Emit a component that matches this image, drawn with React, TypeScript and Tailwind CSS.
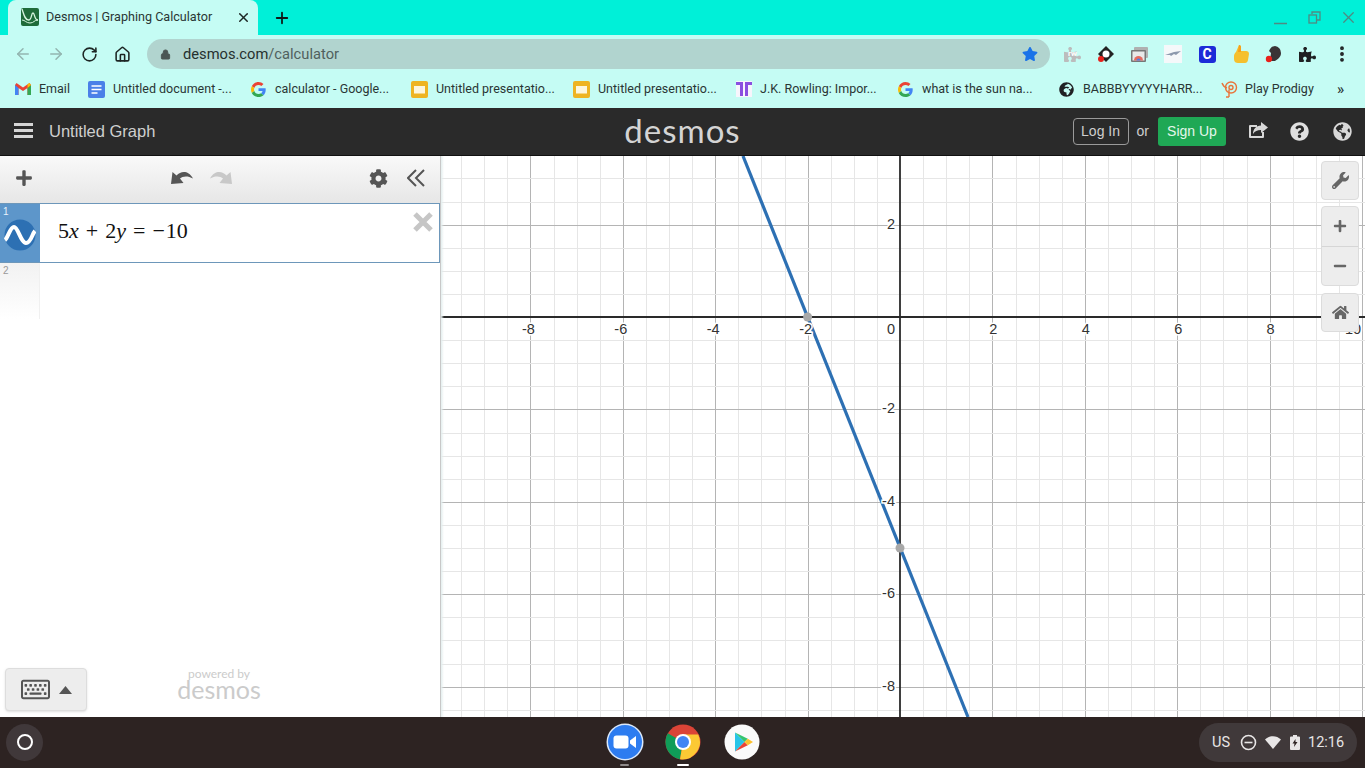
import {
  FaCog,
  FaGlobeAfrica,
  FaGlobeAmericas,
  FaHome,
  FaMinus,
  FaPlus,
  FaPuzzlePiece,
  FaQuestionCircle,
  FaRegKeyboard,
  FaStar,
  FaWrench,
} from "react-icons/fa";
import { ArrowLeft, ArrowRight, EllipsisVertical, House, Lock, Plus, RotateCw, X } from "lucide-react";
import type { ReactNode } from "react";

// -------- small brand icons --------

function DesmosFavicon() {
  return (
    <svg width="18" height="18" viewBox="0 0 18 18">
      <rect x="0" y="0" width="18" height="18" rx="2" fill="#1f6b3a" />
      <path d="M1 1c2 6 3 11 6.500 11S10 5 12 5s1 7 5 7" fill="none" stroke="#d8f5e0" strokeWidth="1.300" />
      <path d="M1 12c3 0 4 3 8 3s4-3 8-3" fill="none" stroke="#d8f5e0" strokeWidth="1" />
    </svg>
  );
}

function GmailIcon() {
  return (
    <svg width="16" height="12" viewBox="0 0 16 12">
      <path d="M0 2v10h3.5V5L8 8l4.5-3v7H16V2l-1.5-2L8 4.5 1.500 0z" fill="#ea4335" />
      <path d="M0 2v10h3.5V5z" fill="#4285f4" />
      <path d="M16 2v10h-3.500V5z" fill="#34a853" />
      <path d="M12.500 5V1.200L14.500 0 16 2z" fill="#fbbc04" />
    </svg>
  );
}

function DocsIcon() {
  return (
    <svg className="mr-[8px]" width="17" height="17" viewBox="0 0 17 17">
      <rect width="17" height="17" rx="2" fill="#4a80e8" />
      <path d="M3.500 5h10M3.500 8.500h10M3.500 12h6" stroke="#fff" strokeWidth="1.500" />
    </svg>
  );
}

function GoogleIcon() {
  return (
    <svg width="15" height="15" viewBox="0 0 48 48">
      <path fill="#EA4335" d="M24 9.500c3.500 0 6.700 1.300 9.200 3.500l6.800-6.800C35.900 2.400 30.300 0 24 0 14.600 0 6.500 5.400 2.600 13.200l7.900 6.200C12.400 13.600 17.700 9.500 24 9.500z" />
      <path fill="#4285F4" d="M47 24.500c0-1.600-.1-3.100-.4-4.500H24v9h13c-.6 3-2.300 5.500-4.800 7.200l7.700 6C44.300 38 47 31.800 47 24.500z" />
      <path fill="#FBBC05" d="M10.500 28.600c-.5-1.400-.8-3-.8-4.600s.3-3.200.8-4.600l-7.900-6.200C.9 16.500 0 20.100 0 24s.9 7.500 2.600 10.800z" />
      <path fill="#34A853" d="M24 48c6.500 0 11.900-2.100 15.900-5.800l-7.700-6c-2.200 1.500-4.900 2.300-8.200 2.300-6.300 0-11.600-4.100-13.500-9.900l-7.900 6.200C6.500 42.600 14.600 48 24 48z" />
    </svg>
  );
}

function SlidesIcon() {
  return (
    <svg className="mr-[8px]" width="17" height="17" viewBox="0 0 17 17">
      <rect width="17" height="17" rx="2" fill="#eeb422" />
      <rect x="3" y="5" width="11" height="7.500" fill="#fdf6dd" />
    </svg>
  );
}

function RowlingIcon() {
  return (
    <svg width="16" height="16" viewBox="0 0 16 16">
      <rect width="16" height="16" fill="#f7f5fc" />
      <path d="M0 1h7v3H0zM9 1h7v3H9z" fill="#8a4fe0" />
      <path d="M4 1h3v14H4zM9 1h3v14H9z" fill="#8a4fe0" />
    </svg>
  );
}

function ProdigyIcon() {
  return (
    <svg width="17" height="17" viewBox="0 0 17 17" fill="none" stroke="#e8743b" strokeWidth="1.400">
      <circle cx="10" cy="6.500" r="5.500" />
      <circle cx="10" cy="6.500" r="2" />
      <path d="M8 16V8.500M5 16h3M1 2c1 3 2 4 5 5" />
    </svg>
  );
}

function ZoomIcon() {
  return (
    <svg width="38" height="38" viewBox="0 0 38 38">
      <circle cx="19" cy="19" r="18.500" fill="#dbe9fb" />
      <circle cx="19" cy="19" r="17" fill="#2d7cf0" />
      <rect x="7.500" y="12.500" width="15" height="13" rx="3" fill="#fff" />
      <path d="M24 17.500l6-4.500v12l-6-4.500z" fill="#fff" />
    </svg>
  );
}

function ChromeIcon() {
  return (
    <svg width="36" height="36" viewBox="0 0 36 36">
      <circle cx="18" cy="18" r="17.500" fill="#db4437" />
      <path d="M18 18L2.800 9.300A17.500 17.500 0 0 0 15 35.300z" fill="#0f9d58" />
      <path d="M18 10.500h15.200A17.500 17.500 0 0 1 15 35.300L18 18z" fill="#fcc934" />
      <circle cx="18" cy="18" r="8" fill="#fff" />
      <circle cx="18" cy="18" r="6" fill="#4285f4" />
    </svg>
  );
}

function PlayIcon() {
  return (
    <svg width="36" height="36" viewBox="0 0 36 36">
      <circle cx="18" cy="18" r="17.500" fill="#fafafa" />
      <path d="M11 8.500v19l9.500-9.500z" fill="#27c4e8" />
      <path d="M11 8.500l9.500 9.500 3.300-3.300z" fill="#36c46f" />
      <path d="M11 27.500l9.500-9.500 3.300 3.300z" fill="#ea4335" />
      <path d="M23.800 14.700l5.200 3.300-5.200 3.300-3.300-3.300z" fill="#fbc02d" />
    </svg>
  );
}

function Extensions() {
  return (
    <div className="flex items-center ml-[6px] h-[36px]">
      <div className="w-[33px] flex justify-center">
        <div className="relative">
          <FaPuzzlePiece className="text-[#bcbcbc]" size={17} />
          <span className="absolute left-[4px] top-[3px] text-[8px] leading-[10px] font-bold text-white">rw</span>
        </div>
      </div>
      <div className="w-[34px] flex justify-center">
        <svg width="18" height="18" viewBox="0 0 18 18">
          <path d="M9 1l8 8-8 8-8-8z" fill="#222" />
          <circle cx="9" cy="9" r="3.500" fill="#fff" />
          <circle cx="4" cy="14" r="3" fill="#e8201a" />
        </svg>
      </div>
      <div className="w-[33px] flex justify-center">
        <svg width="17" height="17" viewBox="0 0 17 17">
          <rect x="3" y="1" width="14" height="11" rx="1" fill="#b0b0b0" />
          <rect x="0" y="4" width="15" height="12" rx="1" fill="#777" />
          <rect x="1.500" y="5.500" width="12" height="9" fill="#e8e8e8" />
          <path d="M3 14.500a4.500 4.500 0 0 1 9 0z" fill="#e46a5e" />
          <path d="M5.500 14.500a2 2 0 0 1 4 0z" fill="#4a80e8" />
        </svg>
      </div>
      <div className="w-[34px] flex justify-center">
        <svg width="18" height="18" viewBox="0 0 18 18">
          <rect width="18" height="18" fill="#f5f8fa" />
          <path d="M1 10l9-3 7-1-5 4-2-1-3 2-1-1z" fill="#8c99ad" />
        </svg>
      </div>
      <div className="w-[34px] flex justify-center">
        <div className="w-[17px] h-[17px] rounded-[3px] bg-[#1d2bd8] flex items-center justify-center text-white text-[14px] font-bold leading-none font-['Roboto',sans-serif]">
          C
        </div>
      </div>
      <div className="w-[33px] flex justify-center">
        <svg width="16" height="18" viewBox="0 0 16 18">
          <path d="M6 0c1.500 0 2 1 2 2v4h5c2 0 3 1 3 3l-1 6c-.3 2-1.500 3-3 3H5c-2 0-4-1-4-4v-3c0-2 1-3 2-4z" fill="#f5c02e" />
          <path d="M6 0c1.500 0 2 1 2 2v5L5 7z" fill="#f7a01c" />
        </svg>
      </div>
      <div className="w-[34px] flex justify-center">
        <svg width="18" height="18" viewBox="0 0 18 18">
          <path d="M10 1a7 7 0 0 1 6 7c0 4-3 6-6 8H5l1-8-2-2a7 7 0 0 1 6-5z" fill="#3a3436" />
          <circle cx="4" cy="14" r="3.200" fill="#e8201a" />
        </svg>
      </div>
      <div className="w-[33px] flex justify-center">
        <FaPuzzlePiece className="text-[#1f2022]" size={17} />
      </div>
      <div className="w-[35px] flex justify-center">
        <EllipsisVertical className="text-[#1f2022]" size={20} strokeWidth={2.600} />
      </div>
    </div>
  );
}

// -------- browser chrome --------

function Bookmark({ icon, label, className }: { icon: ReactNode; label: string; className: string }) {
  return (
    <div className={`flex items-center shrink-0 ${className}`}>
      <div className="min-w-[24px] flex items-center">{icon}</div>
      <span className="whitespace-nowrap">{label}</span>
    </div>
  );
}

function BrowserBar() {
  return (
    <div className="shrink-0 font-['Roboto',sans-serif]">
      <div className="h-[35px] bg-[#00f0d8] flex items-end pl-[8px]">
        <div className="w-[250px] h-[35px] bg-[#c5fcf4] rounded-t-[8px] flex items-center pl-[13px] pr-[7px] pb-[1px]">
          <DesmosFavicon />
          <span className="ml-[7px] text-[12.600px] text-[#2a3634] whitespace-nowrap">Desmos | Graphing Calculator</span>
          <X className="ml-auto text-[#1d2624]" size={15} strokeWidth={2.400} />
        </div>
        <div className="h-[35px] flex items-center ml-[15px]">
          <Plus className="text-[#101a18]" size={18} strokeWidth={2.400} />
        </div>
        <div className="ml-auto h-[35px] flex items-center">
          <svg width="13" height="10" viewBox="0 0 13 10" className="mt-[5px] mr-[21px]">
            <path d="M0 8.500h13" stroke="#4f8a82" strokeWidth="1.500" />
          </svg>
          <svg width="13" height="13" viewBox="0 0 13 13" fill="none" stroke="#4f8a82" strokeWidth="1.300" className="mr-[18px] -mt-[1px]">
            <path d="M4 3V1h8v8h-3" />
            <rect x="1" y="4" width="7.500" height="8" />
          </svg>
          <X size={19} className="mr-[7px] text-[#4f8a82]" strokeWidth={1.600} />
        </div>
      </div>
      <div className="h-[36px] bg-[#c5fcf4] flex items-center pt-[2px]">
        <ArrowLeft className="ml-[14px] text-[#93b5b0]" size={18} />
        <ArrowRight className="ml-[15px] text-[#93b5b0]" size={18} />
        <RotateCw className="ml-[16px] text-[#1d2624]" size={17} strokeWidth={2.200} />
        <House className="ml-[16px] text-[#1d2624]" size={17} strokeWidth={2.200} />
        <div className="ml-[16px] w-[903px] h-[30px] rounded-full bg-[#b1d4cf] flex items-center pl-[13px] pr-[12px] text-[14.700px]">
          <Lock className="text-[#4b5654] fill-[#4b5654]" size={11} />
          <span className="ml-[12px] text-[#25302e]">desmos.com</span>
          <span className="text-[#50605d]">/calculator</span>
          <FaStar className="ml-auto text-[#1a73e8]" size={16} />
        </div>
        <Extensions />
      </div>
      <div className="h-[37px] bg-[#c5fcf4] flex items-center pl-[15px] pb-[1px] text-[12.500px] text-[#2a3634]">
        <Bookmark className="w-[73px]" icon={<GmailIcon />} label="Email" />
        <Bookmark className="w-[163px]" icon={<DocsIcon />} label="Untitled document -..." />
        <Bookmark className="w-[160px]" icon={<GoogleIcon />} label="calculator - Google..." />
        <Bookmark className="w-[162px]" icon={<SlidesIcon />} label="Untitled presentatio..." />
        <Bookmark className="w-[163px]" icon={<SlidesIcon />} label="Untitled presentatio..." />
        <Bookmark className="w-[162px]" icon={<RowlingIcon />} label="J.K. Rowling: Impor..." />
        <Bookmark className="w-[161px]" icon={<GoogleIcon />} label="what is the sun na..." />
        <Bookmark className="w-[162px]" icon={<FaGlobeAfrica className="text-[#202124]" size={15} />} label="BABBBYYYYYHARR..." />
        <Bookmark className="w-[116px]" icon={<ProdigyIcon />} label="Play Prodigy" />
        <span className="text-[15px] font-medium leading-none">»</span>
      </div>
    </div>
  );
}

function DesmosHeader() {
  return (
    <div className="relative h-[48px] shrink-0 bg-[#2a2a2a] border-b border-[#111] flex items-center pb-[1px] font-['Liberation_Sans',sans-serif]">
      <div className="ml-[14px] w-[19px] flex flex-col gap-[3px] -mt-[1px]">
        <div className="h-[3px] bg-[#d5d5d5]" />
        <div className="h-[3px] bg-[#d5d5d5]" />
        <div className="h-[3px] bg-[#d5d5d5]" />
      </div>
      <span className="ml-[16px] text-[16.500px] text-[#cfcfcf]">Untitled Graph</span>
      <div className="absolute left-[620px] top-[2px] w-[125px] text-center font-['Lato',sans-serif] text-[33px] leading-[40px] text-[#d4d4d4] tracking-[1px]">
        desmos
      </div>
      <div className="ml-auto flex items-center">
        <div className="w-[56px] h-[27px] rounded-[4px] border border-[#9a9a9a] flex items-center justify-center text-[14px] text-[#cfcfcf]">
          Log In
        </div>
        <span className="ml-[8px] text-[14px] text-[#cfcfcf]">or</span>
        <div className="ml-[9px] w-[68px] h-[29px] rounded-[3px] bg-[#1fa855] flex items-center justify-center text-[14px] text-[#e4f7eb]">
          Sign Up
        </div>
        <svg className="ml-[22px]" width="20" height="18" viewBox="0 0 20 18" fill="none">
          <path d="M15 10v5H2V4h7" stroke="#d8d8d8" strokeWidth="2" strokeLinejoin="round" />
          <path d="M13 0l7 5.500-7 5.500V8c-4 0-6 1-8 4 0-5 3-8 8-8.500z" fill="#d8d8d8" />
        </svg>
        <FaQuestionCircle className="ml-[22px] text-[#e0e0e0]" size={19} />
        <FaGlobeAmericas className="ml-[24px] mr-[13px] text-[#d8d8d8]" size={19} />
      </div>
    </div>
  );
}

// -------- expression list --------

function ExpressionPanel() {
  return (
    <div className="w-[441px] shrink-0 bg-white border-r border-[#c8c8c8] flex flex-col font-['Liberation_Sans',sans-serif]">
      <div className="h-[48px] shrink-0 bg-gradient-to-b from-[#f9f9f9] to-[#e6e6e6] flex items-center pb-[3px] text-[#555]">
        <FaPlus className="ml-[15px] -mt-[1px]" size={18} />
        <svg className="ml-[138px] -mt-[3px]" width="22" height="14" viewBox="0 0 22 14">
          <path d="M0 14L1.500 2 5.500 5.500C10 1 17 0 22 8.500 17 5.500 11.500 6 9 8.500L12.500 13z" fill="#555" />
        </svg>
        <svg className="ml-[17px] -mt-[3px]" width="22" height="14" viewBox="0 0 22 14">
          <path d="M22 14L20.500 2 16.500 5.500C12 1 5 0 0 8.500 5 5.500 10.500 6 13 8.500L9.500 13z" fill="#c8c8c8" />
        </svg>
        <FaCog className="ml-[137px]" size={19} />
        <svg className="ml-[19px] -mt-[1px]" width="18" height="18" viewBox="0 0 18 18" fill="none" stroke="#555" strokeWidth="2">
          <path d="M9 1L1 9l8 8M17 1L9 9l8 8" />
        </svg>
      </div>
      <div className="h-[58px] shrink-0 flex border border-[#6d97ba] border-l-0 box-content -mt-[1px] w-[439px]">
        <div className="relative w-[40px] bg-[#5d96ca] flex items-center justify-center">
          <span className="absolute left-[3px] top-[2px] text-[10px] leading-[12px] text-[#e8f2fb]">1</span>
          <svg className="mt-[4px]" width="32" height="32" viewBox="0 0 32 32">
            <circle cx="16" cy="16" r="15.500" fill="#2d70b3" />
            <path d="M1 21c3-2 5-13 9-13S17 24 22 24s6-9 9-12" fill="none" stroke="#fff" strokeWidth="4" />
          </svg>
        </div>
        <div className="relative flex-1 flex items-center pl-[18px] pb-[5px] font-['Liberation_Serif',serif] text-[22px] text-[#111] whitespace-nowrap">
          <span>5</span>
          <i>x</i>
          <span className="mx-[7px]">+</span>
          <span>2</span>
          <i>y</i>
          <span className="mx-[7px]">=</span>
          <span className="mr-[1px]">−</span>
          <span>10</span>
          <svg className="absolute right-[6px] top-[8px]" width="20" height="20" viewBox="0 0 20 20">
            <path d="M2 2l16 16M18 2L2 18" stroke="#c6c6c6" strokeWidth="5" />
          </svg>
        </div>
      </div>
      <div className="h-[56px] shrink-0 flex">
        <div className="relative w-[40px] bg-gradient-to-b from-[#f2f2f2] to-white border-r border-[#f0f0f0]">
          <span className="absolute left-[3px] top-[2px] text-[10px] leading-[12px] text-[#999]">2</span>
        </div>
      </div>
      <div className="mt-auto h-[58px] flex items-start pl-[5px] pt-[9px]">
        <div className="w-[82px] h-[43px] rounded-[4px] bg-[#ededed] border border-[#ddd] shadow-sm flex items-center justify-center gap-[9px] text-[#555]">
          <FaRegKeyboard size={29} />
          <svg width="13" height="8" viewBox="0 0 13 8">
            <path d="M6.500 0L13 8H0z" fill="#555" />
          </svg>
        </div>
        <div className="ml-[90px] w-[84px] flex flex-col items-center text-[#cbcbcb] font-['Lato',sans-serif]">
          <span className="text-[12px] leading-[12px]">powered by</span>
          <span className="text-[25px] leading-[18px]">desmos</span>
        </div>
      </div>
    </div>
  );
}

// -------- graph --------

const ORIGIN_X = 459;
const ORIGIN_Y = 161;
const UNIT = 46.2;
const GRAPH_W = 924;
const GRAPH_H = 561;

const range = (from: number, to: number) => Array.from({ length: to - from + 1 }, (_, i) => from + i);

function GraphPaper() {
  const xTicks = range(-40, 40).filter((i) => i !== 0);
  const yTicks = range(-40, 40).filter((i) => i !== 0);
  const px = (i: number) => Math.round(ORIGIN_X + (i * UNIT) / 2) + 0.5;
  const py = (i: number) => Math.round(ORIGIN_Y + (i * UNIT) / 2) + 0.5;
  return (
    <svg width={GRAPH_W} height={GRAPH_H} viewBox={`0 0 ${GRAPH_W} ${GRAPH_H}`} className="block">
      {xTicks.map((i) => (
        <line key={`x${i}`} x1={px(i)} x2={px(i)} y1={0} y2={GRAPH_H} stroke={i % 4 === 0 ? "#b4b4b4" : "#e6e6e6"} />
      ))}
      {yTicks.map((i) => (
        <line key={`y${i}`} x1={0} x2={GRAPH_W} y1={py(i)} y2={py(i)} stroke={i % 4 === 0 ? "#b4b4b4" : "#e6e6e6"} />
      ))}
      <line x1={ORIGIN_X} x2={ORIGIN_X} y1={0} y2={GRAPH_H} stroke="#2a2a2a" strokeWidth={1.800} />
      <line x1={0} x2={GRAPH_W} y1={ORIGIN_Y} y2={ORIGIN_Y} stroke="#2a2a2a" strokeWidth={1.800} />
      <line x1={302} y1={0} x2={527} y2={GRAPH_H} stroke="#2d70b3" strokeWidth={3.200} />
      <circle cx={366.600} cy={ORIGIN_Y} r={4.500} fill="#a8a8a8" />
      <circle cx={ORIGIN_X} cy={392} r={4.500} fill="#a8a8a8" />
      <g
        fontFamily="'Liberation Sans', sans-serif"
        fontSize="14.500"
        fill="#333"
        stroke="#fff"
        strokeWidth={3}
        style={{ paintOrder: "stroke" }}
      >
        {[-8, -6, -4, -2].map((n) => (
          <text key={n} x={ORIGIN_X + n * UNIT - 2} y={178} textAnchor="middle">
            {n}
          </text>
        ))}
        {[2, 4, 6, 8].map((n) => (
          <text key={n} x={ORIGIN_X + n * UNIT + 1} y={178} textAnchor="middle">
            {n}
          </text>
        ))}
        <text x={904} y={178} textAnchor="start">
          10
        </text>
        <text x={450} y={178} textAnchor="middle">
          0
        </text>
        {[2, -2, -4, -6, -8].map((n) => (
          <text key={n} x={454} y={ORIGIN_Y - n * UNIT + 4} textAnchor="end">
            {n}
          </text>
        ))}
      </g>
    </svg>
  );
}

function GraphControls() {
  const box = "w-[38px] rounded-[4px] bg-[#ededed] border border-[#dcdcdc] text-[#666]";
  return (
    <div className="absolute right-[6px] top-[5px] flex flex-col">
      <div className={`${box} h-[39px] flex items-center justify-center`}>
        <FaWrench size={17} />
      </div>
      <div className={`${box} mt-[6px] h-[80px] flex flex-col`}>
        <div className="flex-1 flex items-center justify-center border-b border-[#d6d6d6]">
          <FaPlus size={14} />
        </div>
        <div className="flex-1 flex items-center justify-center">
          <FaMinus size={14} />
        </div>
      </div>
      <div className={`${box} mt-[7px] h-[39px] flex items-center justify-center`}>
        <FaHome size={17} />
      </div>
    </div>
  );
}

// -------- chromeos shelf --------

function Shelf() {
  return (
    <div className="h-[51px] shrink-0 bg-[#2d2322] grid grid-cols-[1fr_auto_1fr] items-center pb-[1px] font-['Roboto',sans-serif]">
      <div className="pl-[6px]">
        <div className="w-[37px] h-[37px] rounded-full bg-[#40383a] flex items-center justify-center">
          <div className="w-[16px] h-[16px] rounded-full border-2 border-white" />
        </div>
      </div>
      <div className="flex items-center gap-[21px]">
        <div className="relative">
          <ZoomIcon />
          <div className="absolute left-[14px] -bottom-[5px] w-[9px] h-[2px] rounded-full bg-[#8f8a8a]" />
        </div>
        <div className="relative">
          <ChromeIcon />
          <div className="absolute left-[12px] -bottom-[6px] w-[12px] h-[2px] rounded-full bg-white" />
        </div>
        <div className="ml-[2px]">
          <PlayIcon />
        </div>
      </div>
      <div className="flex justify-end pr-[8px]">
        <div className="w-[158px] h-[39px] rounded-full bg-[#40393a] flex items-center pl-[13px] pt-[1px] text-[14.500px] text-[#e8e6e6]">
          <span>US</span>
          <svg className="ml-[10px]" width="17" height="17" viewBox="0 0 17 17" fill="none" stroke="#e8e6e6" strokeWidth="1.600">
            <circle cx="8.500" cy="8.500" r="7" />
            <path d="M4.500 8.500h8" />
          </svg>
          <svg className="ml-[8px]" width="16" height="13" viewBox="0 0 16 13">
            <path d="M0 3.500C4.500-1 11.500-1 16 3.500L8 13z" fill="#e8e6e6" />
          </svg>
          <svg className="ml-[9px]" width="10" height="15" viewBox="0 0 10 15">
            <path d="M3 0h4v1.500h2a1 1 0 0 1 1 1V14a1 1 0 0 1-1 1H1a1 1 0 0 1-1-1V2.500a1 1 0 0 1 1-1h2z" fill="#e8e6e6" />
            <path d="M5.500 4L2.500 8.500h2L4 12l3.500-5h-2z" fill="#2d2322" />
          </svg>
          <span className="ml-[8px]">12:16</span>
        </div>
      </div>
    </div>
  );
}

export default function App() {
  return (
    <div className="w-[1365px] h-[768px] flex flex-col overflow-hidden bg-white">
      <BrowserBar />
      <DesmosHeader />
      <div className="flex-1 min-h-0 flex">
        <ExpressionPanel />
        <div className="relative flex-1 overflow-hidden bg-white">
          <GraphPaper />
          <div className="absolute left-0 top-0 bottom-0 w-[3px] bg-gradient-to-r from-[#e4eeee] to-transparent" />
          <GraphControls />
        </div>
      </div>
      <Shelf />
    </div>
  );
}
